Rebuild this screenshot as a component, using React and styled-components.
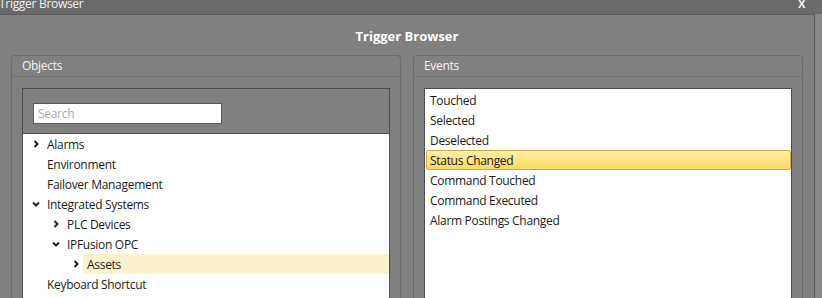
import styled, { createGlobalStyle } from "styled-components";

const GlobalStyle = createGlobalStyle`
  html, body {
    margin: 0;
    padding: 0;
    background: #7a7a7a;
    overflow: hidden;
  }
  body {
    font-family: "Open Sans", "Noto Sans", "Liberation Sans", sans-serif;
    letter-spacing: -0.3px;
  }
`;

const objects = [
  { label: "Alarms", level: 0, arrow: "right" },
  { label: "Environment", level: 0 },
  { label: "Failover Management", level: 0 },
  { label: "Integrated Systems", level: 0, arrow: "down" },
  { label: "PLC Devices", level: 1, arrow: "right" },
  { label: "IPFusion OPC", level: 1, arrow: "down" },
  { label: "Assets", level: 2, arrow: "right", selected: true },
  { label: "Keyboard Shortcut", level: 0 },
];

const events = [
  "Touched",
  "Selected",
  "Deselected",
  "Status Changed",
  "Command Touched",
  "Command Executed",
  "Alarm Postings Changed",
];

const Chevron = ({ dir }) => (
  <svg width="8" height="8" viewBox="0 0 8 8">
    {dir === "down" ? (
      <polyline points="1,2.5 4,5.5 7,2.5" fill="none" stroke="#222" strokeWidth="2" />
    ) : (
      <polyline points="2.5,1 5.5,4 2.5,7" fill="none" stroke="#222" strokeWidth="2" />
    )}
  </svg>
);

const App = () => {
  return (
    <Screen>
      <GlobalStyle />
      <TitleBar>
        <TitleText>Trigger Browser</TitleText>
        <CloseBtn>X</CloseBtn>
      </TitleBar>
      <BodyRow>
        <Dialog>
          <DialogTitle>Trigger Browser</DialogTitle>
          <Panels>
            <Panel>
              <PanelHeader>Objects</PanelHeader>
              <PanelContent>
                <InnerBox>
                  <SearchArea>
                    <SearchInput placeholder="Search" />
                  </SearchArea>
                  <Tree>
                    {objects.map((o) => (
                      <TreeRow key={o.label} $level={o.level}>
                        <Arrow>{o.arrow ? <Chevron dir={o.arrow} /> : null}</Arrow>
                        <TreeLabel $selected={o.selected}>{o.label}</TreeLabel>
                      </TreeRow>
                    ))}
                  </Tree>
                </InnerBox>
              </PanelContent>
            </Panel>
            <Panel>
              <PanelHeader>Events</PanelHeader>
              <PanelContent>
                <EventList>
                  {events.map((e) => (
                    <EventRow key={e} $selected={e === "Status Changed"}>
                      {e}
                    </EventRow>
                  ))}
                </EventList>
              </PanelContent>
            </Panel>
          </Panels>
        </Dialog>
        <SideStrip />
      </BodyRow>
    </Screen>
  );
};

const Screen = styled.div`
  width: 822px;
  height: 298px;
  display: flex;
  flex-direction: column;
  background: #6c6c6c;
  overflow: hidden;
`;

const TitleBar = styled.div`
  height: 14px;
  display: flex;
  justify-content: space-between;
  align-items: center;
  background: #6a6a6a;
  overflow: hidden;
`;

const TitleText = styled.div`
  color: #f2f2f2;
  font-size: 12px;
  line-height: 12px;
  margin-top: -6px;
  margin-left: -1px;
`;

const CloseBtn = styled.div`
  color: #ffffff;
  font-family: "Liberation Sans", sans-serif;
  font-weight: bold;
  font-size: 11px;
  line-height: 11px;
  margin-top: -6px;
  margin-right: 17px;
`;

const BodyRow = styled.div`
  flex: 1;
  display: flex;
`;

const Dialog = styled.div`
  width: 814px;
  background: #808080;
  border-top: 1px solid #5c5c5c;
  border-right: 1px solid #5a5a5a;
  display: flex;
  flex-direction: column;
`;

const SideStrip = styled.div`
  flex: 1;
  background: #878787;
`;

const DialogTitle = styled.div`
  height: 38px;
  display: flex;
  align-items: center;
  justify-content: center;
  color: #ffffff;
  font-weight: bold;
  font-size: 13px;
  letter-spacing: 0;
  padding-top: 2px;
`;

const Panels = styled.div`
  display: flex;
  gap: 12px;
  padding: 0 11px 0 11px;
  flex: 1;
`;

const Panel = styled.div`
  width: 389px;
  flex: 1;
  border: 1px solid #6c6c6c;
  border-bottom: none;
  border-radius: 4px 4px 0 0;
  display: flex;
  flex-direction: column;
`;

const PanelHeader = styled.div`
  height: 20px;
  border-bottom: 1px solid #727272;
  color: #f4f4f4;
  font-size: 12px;
  line-height: 20px;
  padding-left: 10px;
`;

const PanelContent = styled.div`
  flex: 1;
  padding: 11px 10px 0 10px;
  display: flex;
  flex-direction: column;
`;

const InnerBox = styled.div`
  flex: 1;
  border: 1px solid #4e4e4e;
  border-bottom: none;
  display: flex;
  flex-direction: column;
`;

const SearchArea = styled.div`
  height: 45px;
  border-bottom: 1px solid #4e4e4e;
  padding: 12px 0 0 10px;
  box-sizing: border-box;
`;

const SearchInput = styled.input`
  width: 189px;
  height: 21px;
  box-sizing: border-box;
  border: 1px solid #5a5a5a;
  background: #ffffff;
  font-family: inherit;
  letter-spacing: inherit;
  font-size: 12px;
  padding: 0 4px;
  outline: none;
  &::placeholder {
    color: #a8a8a8;
  }
`;

const Tree = styled.div`
  flex: 1;
  background: #ffffff;
`;

const TreeRow = styled.div`
  height: 20px;
  display: flex;
  align-items: stretch;
  padding-left: ${(p) => 6 + p.$level * 20}px;
`;

const Arrow = styled.div`
  width: 14px;
  display: flex;
  align-items: center;
  justify-content: center;
`;

const TreeLabel = styled.div`
  flex: 1;
  display: flex;
  align-items: center;
  padding-left: 4px;
  font-size: 12px;
  color: #1a1a1a;
  background: ${(p) => (p.$selected ? "#fbf1cb" : "transparent")};
`;

const EventList = styled.div`
  flex: 1;
  background: #ffffff;
  border: 1px solid #4e4e4e;
  border-bottom: none;
  padding: 1px 0 0 0;
`;

const EventRow = styled.div`
  height: 20px;
  box-sizing: border-box;
  display: flex;
  align-items: center;
  padding-left: 3px;
  margin: 0 0 0 1px;
  font-size: 12px;
  color: #1a1a1a;
  border: 1px solid ${(p) => (p.$selected ? "#d0a84a" : "transparent")};
  border-radius: 2px;
  background: ${(p) =>
    p.$selected ? "linear-gradient(#fff0a8, #fde483 50%, #fcd865)" : "transparent"};
`;

export default App;
